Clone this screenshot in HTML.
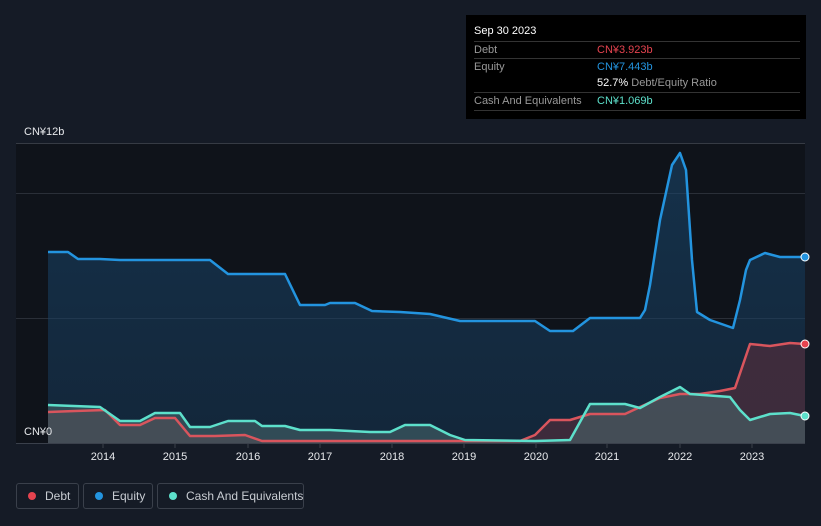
<!DOCTYPE html>
<html><head><meta charset="utf-8"><style>
html,body{margin:0;width:821px;height:526px;overflow:hidden}
body{background:#151b26;font-family:"Liberation Sans",sans-serif;position:relative}
.tip{position:absolute;left:466px;top:15px;width:340px;height:104px;background:#000;color:#fff;font-size:11px}
.tip .r{position:absolute;left:8px;width:326px;border-top:1px solid #333;height:17px;line-height:17px}
.lab{color:#999}
.v{position:absolute;left:123px;top:0;white-space:nowrap}
.leg{position:absolute;top:483px;height:26px;border:1px solid #3a404b;border-radius:3px;color:#c8ccd2;font-size:12px;line-height:24px;box-sizing:border-box;white-space:nowrap;overflow:hidden}
.dot{display:inline-block;width:8px;height:8px;border-radius:50%;margin:0 9px 0 11px;vertical-align:0}
</style></head><body>
<svg width="821" height="526" style="position:absolute;left:0;top:0">
<defs>
<linearGradient id="ge" x1="0" y1="0" x2="0" y2="1"><stop offset="0" stop-color="#1a4a72" stop-opacity=".55"/><stop offset="1" stop-color="#173a5a" stop-opacity=".5"/></linearGradient>
</defs>
<rect x="16" y="143" width="789" height="300" fill="#0f131a"/>
<line x1="16" y1="143.5" x2="805" y2="143.5" stroke="#363b44"/>
<line x1="16" y1="193.5" x2="805" y2="193.5" stroke="#2a2f38"/>
<line x1="16" y1="318.5" x2="805" y2="318.5" stroke="#2a2f38"/>
<path d="M48,252 L68,252 78,259 100,259 120,260 210,260 228,274 285,274 300,305 325,305 330,303 355,303 372,311 400,312 430,314 460,321 535,321 550,331 573,331 590,318 640,318 645,310 650,285 660,220 672,165 680,153 686,170 692,260 697,312 710,320 733,328 740,300 746,270 750,260 765,253 780,257 805,257 L805,443 48,443Z" fill="url(#ge)"/>
<path d="M48,412 L75,411 105,410 120,425 140,425 155,418 175,418 190,436 215,436 245,435 262,441 520,441 535,435 550,420 570,420 590,414 625,414 640,407 660,398 680,394 700,394 720,391 735,388 750,344 770,346 790,343 805,344 L805,443 48,443Z" fill="#5a2f3c" fill-opacity=".6"/>
<path d="M48,405 L100,407 120,421 140,421 155,413 180,413 190,427 210,427 228,421 255,421 262,426 285,426 300,430 330,430 370,432 390,432 405,425 430,425 450,435 465,440 535,441 570,440 590,404 625,404 640,408 660,397 680,387 690,394 730,397 740,410 750,420 770,414 790,413 805,416 L805,443 48,443Z" fill="#4a6a6e" fill-opacity=".55"/>
<path d="M48,252 L68,252 78,259 100,259 120,260 210,260 228,274 285,274 300,305 325,305 330,303 355,303 372,311 400,312 430,314 460,321 535,321 550,331 573,331 590,318 640,318 645,310 650,285 660,220 672,165 680,153 686,170 692,260 697,312 710,320 733,328 740,300 746,270 750,260 765,253 780,257 805,257" fill="none" stroke="#2394df" stroke-width="2.5" stroke-linejoin="round"/>
<path d="M48,412 L75,411 105,410 120,425 140,425 155,418 175,418 190,436 215,436 245,435 262,441 520,441 535,435 550,420 570,420 590,414 625,414 640,407 660,398 680,394 700,394 720,391 735,388 750,344 770,346 790,343 805,344" fill="none" stroke="#d9555d" stroke-width="2.5" stroke-linejoin="round"/>
<path d="M48,405 L100,407 120,421 140,421 155,413 180,413 190,427 210,427 228,421 255,421 262,426 285,426 300,430 330,430 370,432 390,432 405,425 430,425 450,435 465,440 535,441 570,440 590,404 625,404 640,408 660,397 680,387 690,394 730,397 740,410 750,420 770,414 790,413 805,416" fill="none" stroke="#5de0cb" stroke-width="2.5" stroke-linejoin="round"/>
<circle cx="805" cy="257" r="4" fill="#2394df" stroke="#fff"/>
<circle cx="805" cy="344" r="4" fill="#e5434f" stroke="#fff"/>
<circle cx="805" cy="416" r="4" fill="#5de0cb" stroke="#fff"/>
<line x1="16" y1="443.5" x2="805" y2="443.5" stroke="#3a404b"/>
<g stroke="#3a404b"><line x1="103" y1="443" x2="103" y2="448"/><line x1="175" y1="443" x2="175" y2="448"/><line x1="248" y1="443" x2="248" y2="448"/><line x1="320" y1="443" x2="320" y2="448"/><line x1="392" y1="443" x2="392" y2="448"/><line x1="464" y1="443" x2="464" y2="448"/><line x1="536" y1="443" x2="536" y2="448"/><line x1="607" y1="443" x2="607" y2="448"/><line x1="680" y1="443" x2="680" y2="448"/><line x1="752" y1="443" x2="752" y2="448"/></g>
<g fill="#e6e8eb" font-size="11" text-anchor="middle" font-family="Liberation Sans,sans-serif"><text x="103" y="460">2014</text><text x="175" y="460">2015</text><text x="248" y="460">2016</text><text x="320" y="460">2017</text><text x="392" y="460">2018</text><text x="464" y="460">2019</text><text x="536" y="460">2020</text><text x="607" y="460">2021</text><text x="680" y="460">2022</text><text x="752" y="460">2023</text></g>
<text x="24" y="135" fill="#e6e8eb" font-size="11">CN¥12b</text>
<text x="24" y="435" fill="#e6e8eb" font-size="11">CN¥0</text>
</svg>
<div class="tip">
<div style="position:absolute;left:8px;top:10px;font-size:11px">Sep 30 2023</div>
<div class="r" style="top:26px"><span class="lab">Debt</span><span class="v" style="color:#e5434f">CN¥3.923b</span></div>
<div class="r" style="top:43px"><span class="lab">Equity</span><span class="v" style="color:#2394df">CN¥7.443b</span></div>
<div class="r" style="top:60px;border-top:none"><span class="v"><b style="font-weight:normal;color:#fff">52.7%</b> <span class="lab">Debt/Equity Ratio</span></span></div>
<div class="r" style="top:77px"><span class="lab">Cash And Equivalents</span><span class="v" style="color:#5de0cb">CN¥1.069b</span></div>
<div class="r" style="top:95px;height:0"></div>
</div>
<div class="leg" style="left:16px;width:63px"><span class="dot" style="background:#e5434f"></span>Debt</div>
<div class="leg" style="left:83px;width:70px"><span class="dot" style="background:#2394df"></span>Equity</div>
<div class="leg" style="left:157px;width:147px"><span class="dot" style="background:#5de0cb"></span>Cash And Equivalents</div>
</body></html>
